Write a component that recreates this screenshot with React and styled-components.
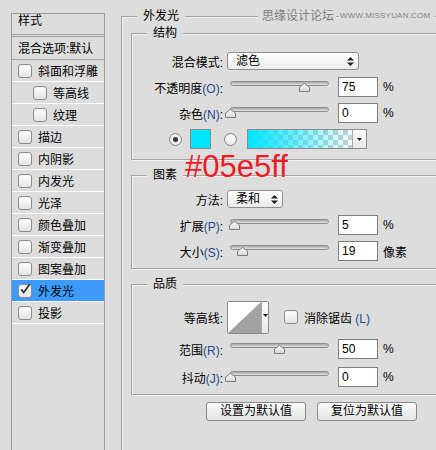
import React from "react";
import styled, { createGlobalStyle } from "styled-components";

const GlobalStyle = createGlobalStyle`
  html, body { margin: 0; padding: 0; background: #dddddd; overflow: hidden; }
  body {
    font-family: "Liberation Sans", "Noto Sans CJK SC", sans-serif;
    font-size: 12px;
    color: #000;
  }
  * { box-sizing: border-box; }
`;

const FONT = `"Liberation Sans", "Noto Sans CJK SC", sans-serif`;

const Page = styled.div`
  position: relative;
  width: 436px;
  height: 450px;
  overflow: hidden;
  display: flex;
  align-items: flex-start;
  gap: 16px;
  padding: 13px 0 0 11px;
  background: #dddddd;
`;

/* ---------- left style list ---------- */
const StyleList = styled.div`
  flex: 0 0 94px;
  height: 437px;
  border: 1px solid #9a9a9a;
  border-bottom: none;
  display: flex;
  flex-direction: column;
`;

const ListHeader = styled.div`
  height: 23px;
  border-bottom: 3px double #9f9f9f;
  padding: 0 0 0 6px;
  line-height: 15px;
`;

const BlendRow = styled.div`
  height: 23px;
  border-bottom: 1px solid #a8a8a8;
  padding: 0 0 2px 6px;
  display: flex;
  align-items: center;
  white-space: nowrap;
`;

const EffectRow = styled.div`
  height: 22px;
  border-bottom: 1px solid #ffffff;
  display: flex;
  align-items: center;
  gap: 6px;
  padding-left: ${(p) => (p.$indent ? 21 : 6)}px;
  background: ${(p) => (p.$selected ? "#3c9bfd" : "transparent")};
  white-space: nowrap;
`;

const CheckBox = styled.span`
  flex: 0 0 14px;
  width: 14px;
  height: 14px;
  border: 1px solid #8c8c8c;
  border-radius: 3px;
  background: linear-gradient(#ffffff, #e4e4e4);
  box-shadow: inset 0 1px 1px rgba(0, 0, 0, 0.06);
  display: flex;
  align-items: center;
  justify-content: center;
  margin-left: ${(p) => p.$ml || 0}px;
`;

/* ---------- right settings ---------- */
const Main = styled.div`
  flex: 0 0 330px;
  margin-top: 3px;
`;

const Group = styled.div`
  position: relative;
  border: 1px solid #a2a2a2;
  box-shadow: inset 1px 1px 0 #f2f2f2, 1px 1px 0 #f2f2f2;
  padding: ${(p) => p.$pt}px 9px ${(p) => p.$pb}px ${(p) => p.$pl ?? 0}px;
  min-height: ${(p) => p.$minH || 0}px;
  display: flex;
  flex-direction: column;
  gap: ${(p) => p.$gap || 0}px;
`;

const Legend = styled.span`
  position: absolute;
  top: -9px;
  left: 15px;
  padding: 0 6px;
  line-height: 16px;
  background: #dddddd;
`;

const Row = styled.div`
  height: ${(p) => p.$h}px;
  display: flex;
  align-items: center;
  padding-left: ${(p) => p.$pl || 0}px;
  white-space: nowrap;
`;

const Label = styled.span`
  flex: 0 0 91px;
  text-align: right;
`;

const Key = styled.span`
  color: #24498a;
`;

const Select = styled.div`
  width: ${(p) => p.$w}px;
  height: 18px;
  margin-left: 4px;
  border: 1px solid #8e8e8e;
  border-radius: 3px;
  background: linear-gradient(#ffffff, #ebebeb);
  display: flex;
  align-items: center;
  justify-content: space-between;
  padding: 0 4px 0 8px;
  line-height: 16px;
`;

const Slider = styled.div`
  position: relative;
  width: 102px;
  height: 13px;
  margin-left: 4px;
  padding-left: 3px;
`;

const Track = styled.div`
  width: 99px;
  height: 5px;
  border: 1px solid #8d8d8d;
  border-radius: 3px;
  background: linear-gradient(#a5a5a5, #d9d9d9 80%);
`;

const Thumb = styled.svg`
  position: absolute;
  top: 2px;
  width: 11px;
  height: 9px;
  display: block;
`;

const Field = styled.input`
  width: 40px;
  height: 20px;
  margin: 0 0 0 9px;
  border: 1px solid #7f7f7f;
  background: #ffffff;
  padding: 0 3px;
  font: 12px ${FONT};
  color: #000;
  outline: none;
`;

const Unit = styled.span`
  margin-left: 5px;
`;

const Radio = styled.span`
  flex: 0 0 13px;
  width: 13px;
  height: 13px;
  border: 1px solid #858585;
  border-radius: 50%;
  background: radial-gradient(circle at 50% 35%, #ffffff, #dedede);
  display: flex;
  align-items: center;
  justify-content: center;
  margin-left: ${(p) => p.$ml || 0}px;
  &::after {
    content: "";
    display: ${(p) => (p.$checked ? "block" : "none")};
    width: 5px;
    height: 5px;
    border-radius: 50%;
    background: #333;
  }
`;

const Swatch = styled.span`
  width: 21px;
  height: 20px;
  margin-left: 8px;
  border: 1px solid #8a8a8a;
  background: ${(p) => p.$color};
`;

const GradientBox = styled.div`
  width: 120px;
  height: 20px;
  margin-left: 10px;
  border: 1px solid #8c8c8c;
  display: flex;
`;

const GradientFill = styled.div`
  flex: 1;
  background: linear-gradient(to right, rgba(0, 229, 255, 1), rgba(0, 229, 255, 0.04)),
    repeating-conic-gradient(#cdcdcd 0 25%, #ffffff 0 50%) 0 0 / 10px 10px;
`;

const DropPart = styled.div`
  flex: 0 0 ${(p) => p.$w}px;
  border-left: 1px solid #a9a9a9;
  background: linear-gradient(#fafafa, #e8e8e8);
  display: flex;
  align-items: center;
  justify-content: center;
  padding-bottom: ${(p) => p.$pb || 0}px;
`;

const Contour = styled.div`
  width: 42px;
  height: 33px;
  margin-left: 4px;
  border: 1px solid #8a8a8a;
  border-radius: 2px;
  background: #ffffff;
  display: flex;
  overflow: hidden;
`;

const ContourCurve = styled.svg`
  flex: 1;
  height: 31px;
  display: block;
`;

const CheckText = styled.span`
  margin-left: 6px;
`;

const ButtonBar = styled.div`
  display: flex;
  gap: 11px;
  padding-left: 75px;
  margin-top: -8px;
`;

const Button = styled.button`
  width: 100px;
  height: 19px;
  padding: 0;
  border: 1px solid #8a8a8a;
  border-radius: 3px;
  background: linear-gradient(#fbfbfb, #e4e4e4);
  font: 12px ${FONT};
  line-height: 17px;
  color: #000;
`;

const Annotation = styled.div`
  position: absolute;
  top: 151px;
  left: 185px;
  font: 31px "Liberation Sans", sans-serif;
  line-height: 31px;
  color: #ed1c24;
`;

const Watermark = styled.div`
  position: absolute;
  top: 8px;
  left: 258px;
  display: flex;
  align-items: center;
  gap: 3px;
  line-height: 16px;
`;

const WmCn = styled.span`
  background: #dddddd;
  padding: 0 2px 0 4px;
  color: #7d7d7d;
  font-size: 12px;
`;

const WmEn = styled.span`
  background: #dddddd;
  padding: 0 4px 0 1px;
  color: #858585;
  font-size: 8px;
  letter-spacing: 0.2px;
`;

/* ---------- small drawings ---------- */
const UpDown = () => (
  <svg width="7" height="9" viewBox="0 0 7 9">
    <path d="M3.5 0 L7 3.5 H0 Z M0 5.5 H7 L3.5 9 Z" fill="#222" />
  </svg>
);

const DownTri = () => (
  <svg width="5" height="3" viewBox="0 0 5 3">
    <path d="M0 0 H5 L2.5 3 Z" fill="#222" />
  </svg>
);

const Check = () => (
  <svg width="14" height="14" viewBox="0 0 14 14" style={{ marginTop: -3 }}>
    <path d="M2.5 7.5 L5.5 11 L12.5 1.5" stroke="#2a2a2a" strokeWidth="2" fill="none" />
  </svg>
);

const SliderCtl = ({ f }) => (
  <Slider>
    <Track />
    <Thumb viewBox="0 0 11 9" style={{ left: 3 + f * 99 - 5.5 }}>
      <defs>
        <linearGradient id="tg" x1="0" y1="0" x2="0" y2="1">
          <stop offset="0" stopColor="#ffffff" />
          <stop offset="1" stopColor="#d4d4d4" />
        </linearGradient>
      </defs>
      <polygon points="0.5,4 5.5,0.5 10.5,4 10.5,8.5 0.5,8.5" fill="url(#tg)" stroke="#7e7e7e" />
    </Thumb>
  </Slider>
);

const SliderRow = ({ h, label, k, f, value, unit }) => (
  <Row $h={h}>
    <Label>
      {label}
      <Key>({k})</Key>:
    </Label>
    <SliderCtl f={f} />
    <Field value={value} readOnly />
    <Unit>{unit}</Unit>
  </Row>
);

const effects = [
  { label: "斜面和浮雕" },
  { label: "等高线", indent: true },
  { label: "纹理", indent: true },
  { label: "描边" },
  { label: "内阴影" },
  { label: "内发光" },
  { label: "光泽" },
  { label: "颜色叠加" },
  { label: "渐变叠加" },
  { label: "图案叠加" },
  { label: "外发光", checked: true, selected: true },
  { label: "投影" },
];

export default function App() {
  return (
    <Page>
      <GlobalStyle />
      <StyleList>
        <ListHeader>样式</ListHeader>
        <BlendRow>混合选项:默认</BlendRow>
        {effects.map((e) => (
          <EffectRow key={e.label} $indent={e.indent} $selected={e.selected}>
            <CheckBox>{e.checked && <Check />}</CheckBox>
            <span>{e.label}</span>
          </EffectRow>
        ))}
      </StyleList>

      <Main>
        <Group $pt={16} $pb={0} $pl={9} $minH={440} $gap={15}>
          <Legend>外发光</Legend>

          <Group $pt={14} $pb={7}>
            <Legend>结构</Legend>
            <Row $h={26}>
              <Label>混合模式:</Label>
              <Select $w={132}>
                <span>滤色</span>
                <UpDown />
              </Select>
            </Row>
            <SliderRow h={26} label="不透明度" k="O" f={0.75} value="75" unit="%" />
            <SliderRow h={26} label="杂色" k="N" f={0} value="0" unit="%" />
            <Row $h={26}>
              <Radio $ml={37} $checked />
              <Swatch $color="#00e5ff" />
              <Radio $ml={13} />
              <GradientBox>
                <GradientFill />
                <DropPart $w={14}>
                  <DownTri />
                </DropPart>
              </GradientBox>
            </Row>
          </Group>

          <Group $pt={10} $pb={4}>
            <Legend>图素</Legend>
            <Row $h={26}>
              <Label>方法:</Label>
              <Select $w={56}>
                <span>柔和</span>
                <UpDown />
              </Select>
            </Row>
            <SliderRow h={26} label="扩展" k="P" f={0.05} value="5" unit="%" />
            <SliderRow h={26} label="大小" k="S" f={0.13} value="19" unit="像素" />
          </Group>

          <Group $pt={14} $pb={3}>
            <Legend>品质</Legend>
            <Row $h={36}>
              <Label>等高线:</Label>
              <Contour>
                <ContourCurve viewBox="0 0 33 31" preserveAspectRatio="none">
                  <polygon points="0,31 33,0 33,31" fill="#a2a2a2" />
                </ContourCurve>
                <DropPart $w={7} $pb={4}>
                  <DownTri />
                </DropPart>
              </Contour>
              <CheckBox $ml={15} />
              <CheckText>
                消除锯齿 <Key>(L)</Key>
              </CheckText>
            </Row>
            <SliderRow h={28} label="范围" k="R" f={0.5} value="50" unit="%" />
            <SliderRow h={28} label="抖动" k="J" f={0} value="0" unit="%" />
          </Group>

          <ButtonBar>
            <Button>设置为默认值</Button>
            <Button>复位为默认值</Button>
          </ButtonBar>
        </Group>
      </Main>

      <Watermark>
        <WmCn>思缘设计论坛</WmCn>
        <WmEn>WWW.MISSYUAN.COM</WmEn>
      </Watermark>
      <Annotation>#05e5ff</Annotation>
    </Page>
  );
}
